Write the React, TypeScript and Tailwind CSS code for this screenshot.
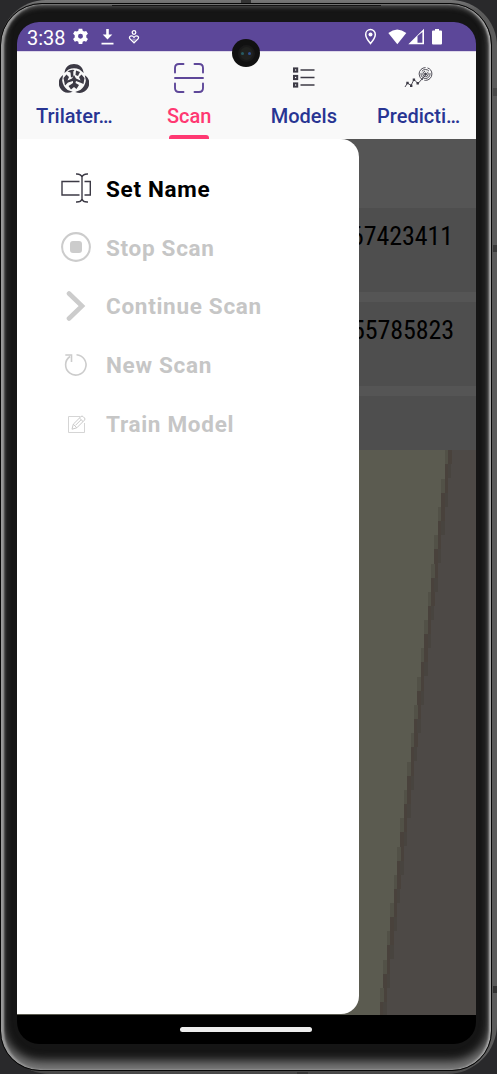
import React from "react";

const tabs = [
  { label: "Trilater…", color: "text-[#283593]", icon: <TriIcon /> },
  { label: "Scan", color: "text-[#ff3872]", icon: <ScanIcon />, active: true },
  { label: "Models", color: "text-[#283593]", icon: <ModelsIcon /> },
  { label: "Predicti…", color: "text-[#283593]", icon: <PredictIcon /> },
];

const items = [
  { label: "Set Name", icon: <RenameIcon />, enabled: true },
  { label: "Stop Scan", icon: <StopIcon /> },
  { label: "Continue Scan", icon: <ChevronIcon /> },
  { label: "New Scan", icon: <RedoIcon /> },
  { label: "Train Model", icon: <EditIcon /> },
];

const mapSteps = Array.from({ length: 21 }, (_, i) => ({ x: 431 - i * 3.4, y: i * 28.3 - 14 }));

function TriIcon() {
  return (
    <svg width="30" height="30" viewBox="0 0 30 30" fill="#3c3a45">
      {[0, 120, 240].map((a) => (
        <path key={a} transform={`rotate(${a} 15 17)`} d="M5.500 10C6 4 10 1 15 1S24 4 24.700 10L20.500 6.500Q15 4.200 9.500 6.500Z" />
      ))}
      <path d="M8.500 8.500Q12 6 15.500 7L14.300 8.500V13.500L12 14.500L11.500 9.500ZM17 7.500L21 9L19 13L16.500 12Z" />
      <path d="M4.500 15L7.500 11.500L10 14L8.500 17.500L13 15.500L15 12L17 15.500L21.500 17.500L20 14L22.500 11.500L25.500 15L24.500 21L21 19.500L17 18L16.500 20L20 22L17.500 26L15 24L12 26.500L9.500 23L14 20V18L9 19.500L6 22.500Z" />
    </svg>
  );
}

function ScanIcon() {
  return (
    <svg width="30" height="30" viewBox="0 0 30 30" fill="none" stroke="#5e4799" strokeWidth="1.900" strokeLinecap="round">
      <path d="M1 9.500V5Q1 1 5 1H9.500M20.500 1H25Q29 1 29 5V9.500M29 20.500V25Q29 29 25 29H20.500M9.500 29H5Q1 29 1 25V20.500M1 15H29" />
    </svg>
  );
}

function ModelsIcon() {
  return (
    <svg width="30" height="30" viewBox="0 0 30 30" fill="none" stroke="#3c3a45">
      {[7, 14.5, 22].map((y) => (
        <g key={y}>
          <rect x="5" y={y - 1.6} width="3.200" height="3.200" strokeWidth="2" />
          <path d={`M11.500 ${y}H25.500`} strokeWidth="1.400" />
        </g>
      ))}
    </svg>
  );
}

function PredictIcon() {
  return (
    <svg width="30" height="30" viewBox="0 0 30 30" fill="none" stroke="#3c3a45" strokeWidth=".9">
      <path d="M1 24L3.500 20L7 22.500L10 16.500L14 20.500L22 11.500" />
      <path d="M2.300 18.800h2.400v2.400H2.300zM6 21.500h2.400v2.400H6zM8.700 15.500h2.400v2.400H8.700zM12.500 19h2.400v2.400h-2.400z" fill="#3c3a45" stroke="none" />
      <circle cx="21.500" cy="11" r="1" fill="#3c3a45" />
      <circle cx="21.500" cy="11" r="2.700" strokeDasharray="12 2" />
      <circle cx="21.500" cy="11" r="4.500" strokeDasharray="15 1.500 8 2" />
      <circle cx="21.500" cy="11" r="6.400" strokeDasharray="11 1.500 17 2" />
    </svg>
  );
}

function RenameIcon() {
  return (
    <svg width="30" height="30" viewBox="0 0 30 30" fill="none" stroke="#3c3a45" strokeWidth="1.400">
      <path d="M18.500 8.500H1V22H18.500M23.500 8.500H29.300V22H23.500M21 3.500V26.500M15 1C18.500.8 20.300 1.700 21 4C21.700 1.700 23.500 .8 27 1M15 29C18.500 29.200 20.300 28.300 21 26C21.700 28.300 23.500 29.200 27 29" />
    </svg>
  );
}

function StopIcon() {
  return (
    <svg width="30" height="30" viewBox="0 0 30 30" fill="none">
      <circle cx="15" cy="15" r="13.900" stroke="#cccccc" strokeWidth="2.100" />
      <rect x="9" y="9" width="12" height="12" rx="3" fill="#cccccc" />
    </svg>
  );
}

function ChevronIcon() {
  return (
    <svg width="30" height="30" viewBox="0 0 30 30" fill="none">
      <path d="M8 2.500L21 15L8 27.500" stroke="#cccccc" strokeWidth="4.600" strokeLinecap="round" />
    </svg>
  );
}

function RedoIcon() {
  return (
    <svg width="30" height="30" viewBox="0 0 30 30" fill="none" stroke="#cccccc" strokeWidth="1.600">
      <path d="M15.500 4.700A10.200 10.200 0 1 1 9 6.500M4.300 5H10.500V12" />
    </svg>
  );
}

function EditIcon() {
  return (
    <svg width="30" height="30" viewBox="0 0 30 30" fill="none" stroke="#c9c9c9" strokeWidth="1">
      <path d="M19 7.500H7.500V23.500H23.500V14" stroke="#d5d5d5" />
      <path d="M11 20.200L12.300 15.200L20 7.500Q21 6.500 22.200 7.700L23.500 9Q24.500 10 23.500 11.100L15.800 18.800ZM18.500 9.100L22 12.500M12.300 15.200L15.800 18.800M14.500 16.300L20 10.800" />
    </svg>
  );
}

function StatusBar() {
  return (
    <div className="flex h-[29px] shrink-0 items-center bg-[#5c4799] pl-[10px] text-white">
      <span className="w-[38px] pt-[2px] text-[20px] leading-7">3:38</span>
      <svg className="ml-[7px]" width="17" height="17" viewBox="0 0 24 24" fill="white" fillRule="evenodd">
        <path d="M9.500 1h5l.6 3 2 1.100 2.900-1 2.500 4-2.300 2v3.300l2.300 2-2.500 4-2.900-1-2 1.100-.6 3h-5l-.6-3-2-1.100-2.900 1-2.500-4 2.300-2v-3.300l-2.300-2 2.500-4 2.900 1 2-1.100zM12 8.200a3.500 3.500 0 1 0 0 7 3.500 3.500 0 0 0 0-7z" />
      </svg>
      <svg className="ml-3" width="13" height="17" viewBox="0 0 13 17" fill="white">
        <path d="M5.200 1h2.600v5.500h3.500L6.500 11.500 1.700 6.500h3.500zM.5 14.700h12v1.800H.5z" />
      </svg>
      <svg className="ml-[14px]" width="13" height="16" viewBox="0 0 13 16" fill="none" stroke="white" strokeWidth="1.300">
        <circle cx="6" cy="3.500" r="1.800" />
        <path d="M6 13.800L2 9.900Q.7 8 2.500 7.200Q4.500 6.300 6 8.500Q7.500 6.300 9.500 7.200Q11.300 8 10 9.900Z" />
        <path d="M4.500 10.200L6 11.300L7.500 10.200" strokeWidth=".7" />
      </svg>
      <svg className="ml-auto" width="13" height="17" viewBox="0 0 13 17" fill="none">
        <path d="M6.500 15.500Q1.700 9.700 1.700 6.400A4.800 4.800 0 0 1 11.300 6.400Q11.300 9.700 6.500 15.500Z" stroke="white" strokeWidth="1.500" />
        <circle cx="6.500" cy="6.400" r="2" fill="white" />
      </svg>
      <svg className="ml-[11px]" width="20" height="17" viewBox="0 0 20 17" fill="white">
        <path d="M.3 5Q9.200-2 18.300 5L9.300 16.200Z" />
      </svg>
      <svg width="17" height="17" viewBox="0 0 17 17" fill="white" fillRule="evenodd">
        <path d="M.3 16.200L16 .7V16.200ZM9.500 8V14.700H14.400V4Z" />
      </svg>
      <svg className="ml-[7px] mr-[34px]" width="10" height="17" viewBox="0 0 10 17" fill="white">
        <path d="M3 1h4v1.500h2q1 0 1 1v12q0 1-1 1H1q-1 0-1-1V3.500q0-1 1-1h2z" />
      </svg>
    </div>
  );
}

export default function App() {
  return (
    <div className="relative flex h-[1074px] w-[497px] overflow-hidden bg-[#29292b] font-['Roboto',sans-serif]">
      <div className="absolute inset-0 rounded-[46px_46px_50px_50px] bg-[linear-gradient(to_bottom,#777,#5b5b5b_10px,#5b5b5b_1058px,#484848)]" />
      <div className="absolute top-[3px] right-[5px] bottom-[3px] left-0 rounded-[42px_42px_40px_40px] border border-[#080808] bg-[#151515] shadow-[inset_3px_0_2px_0px_#999,inset_-2px_0_2px_0px_#aaa,inset_0_-8px_10px_1px_#777,inset_0_2px_5px_1px_#555]" />
      <div className="absolute top-0 left-[241px] h-[3px] w-[10px] bg-[#333]" />
      <div className="absolute top-[88px] right-0 h-[8px] w-[4px] bg-[#484848]" />
      <div className="absolute top-[245px] right-0 h-[7px] w-[4px] bg-[#3a3a3a]" />
      <div className="absolute right-0 bottom-[81px] h-[7px] w-[4px] bg-[#333]" />
      <div className="absolute bottom-0 left-[297px] h-[2px] w-[11px] bg-[#383838]" />
      <div className="absolute top-[5px] left-[112px] h-px w-[269px] bg-[#151515]" />
      <div className="relative mt-[22px] ml-[17px] flex h-[1022px] w-[459px] flex-col overflow-hidden rounded-[22px] bg-black">
        <StatusBar />
        <nav className="grid h-[88px] shrink-0 grid-cols-4 border-t border-[#ded8e9] bg-[#f9f9f9]">
          {tabs.map((tab) => (
            <div key={tab.label} className={`relative flex flex-col items-center pt-[11px] ${tab.color}`}>
              {tab.icon}
              <span className="mt-[9px] text-[20px] leading-[28px] font-medium">{tab.label}</span>
              {tab.active && <i className="absolute bottom-0 h-[4px] w-10 rounded-t-[3px] bg-[#ff3872]" />}
            </div>
          ))}
        </nav>
        <main className="relative flex h-[876px] shrink-0 bg-[#555]">
          <div className="flex w-full flex-col text-black">
            <div className="h-[69px]" />
            <div className="flex h-[84px] justify-end bg-[#4e4e4e] pt-[12px] pr-[23px] font-['Roboto_Condensed','Roboto',sans-serif] text-[26px] leading-8 tracking-[-0.100px]">
              <span>67423411</span>
            </div>
            <div className="mt-[10px] flex h-[84px] justify-end bg-[#4e4e4e] pt-[12px] pr-[22px] font-['Roboto_Condensed','Roboto',sans-serif] text-[26px] leading-8 tracking-[-0.100px]">
              <span>55785823</span>
            </div>
            <div className="mt-[10px] h-[54px] bg-[#4e4e4e]" />
            <svg className="block" width="459" height="565" viewBox="0 0 459 565" shapeRendering="crispEdges">
              <path d="M0 0H459V565H0Z" fill="#5b5b50" />
              {mapSteps.map(({ x, y }) => (
                <g key={x}>
                  <rect x={x} y={y} width={459 - x} height="29" fill="#4d4946" />
                  <rect x={x} y={y} width="3.500" height="29" fill="#49423c" />
                  <rect x={x} y={y - 14} width="3.500" height="14" fill="#525147" />
                  <rect x={x + 3.4} y={y} width="3.400" height="14" fill="#48443f" />
                </g>
              ))}
            </svg>
          </div>
          <aside className="absolute top-0 left-0 flex h-[875px] w-[342px] flex-col rounded-r-[18px] bg-white pt-[20px] pl-[44px]">
            {items.map((item) => (
              <div key={item.label} className={`flex h-[58.800px] items-center gap-[15px] ${item.enabled ? "text-black" : "text-[#c6c6c6]"}`}>
                {item.icon}
                <span className="pt-px text-[22.500px] leading-7 font-bold tracking-[0.700px]">{item.label}</span>
              </div>
            ))}
          </aside>
        </main>
        <div className="flex h-[29px] items-center justify-center pr-[2px]">
          <div className="h-[5px] w-[132px] rounded-full bg-[#ededed]" />
        </div>
      </div>
      <div className="absolute top-[39px] left-[232px] flex size-[28px] items-center justify-center rounded-full bg-[#111]">
        <div className="flex size-[17px] items-center justify-center gap-[4px] rounded-full border-2 border-[#191919] bg-[#20211f]">
          <i className="size-[3px] rounded-full bg-[#275b63]" />
          <i className="size-[3px] rounded-full bg-[#304f91]" />
        </div>
      </div>
    </div>
  );
}
